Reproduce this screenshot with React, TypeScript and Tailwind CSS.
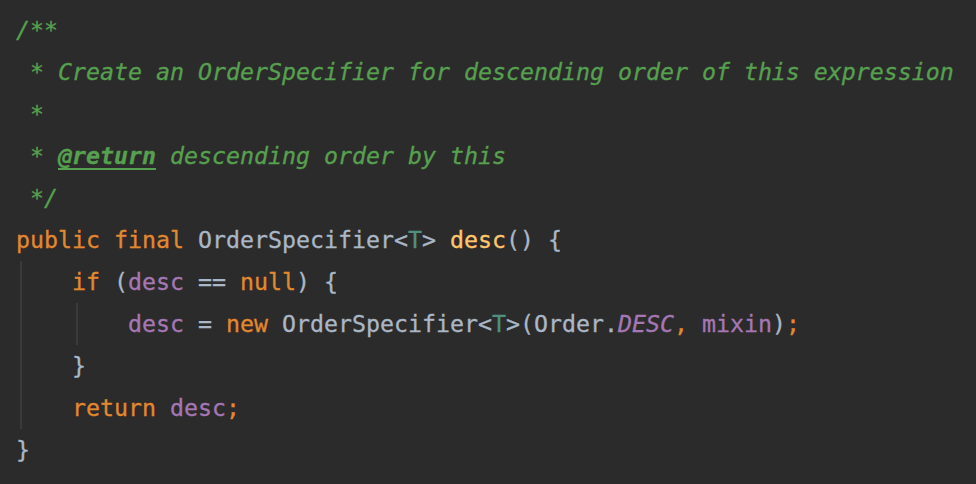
const C = {
  comment: 'text-[#56a04f] italic',
  kw: 'text-[#e2882f]',
  text: 'text-[#a9b7c6]',
  field: 'text-[#a577b4]',
  method: 'text-[#ffc66d]',
  tparam: 'text-[#4f8f7f]',
};

function Guide({ left }: { left: string }) {
  return <span className={`absolute top-0 h-full w-[2px] bg-[#3a3a3a] ${left}`} />;
}

function Line({ children, guides }: { children?: React.ReactNode; guides?: React.ReactNode }) {
  return (
    <div className="relative h-[42px] leading-[42px] whitespace-pre">
      {guides}
      <span className="relative">{children}</span>
    </div>
  );
}

export default function App() {
  const g1 = <Guide left="left-[4px]" />;
  const g2 = <Guide left="left-[60px]" />;
  return (
    <div
      className="w-[976px] h-[484px] bg-[#2b2b2b] pl-4 pt-[9px] overflow-hidden text-[23.25px] [-webkit-text-stroke:0.3px_currentColor]"
      style={{ fontFamily: '"DejaVu Sans Mono", monospace' }}
    >
      <Line><span className={C.comment}>/**</span></Line>
      <Line><span className={C.comment}> * Create an OrderSpecifier for descending order of this expression</span></Line>
      <Line><span className={C.comment}> *</span></Line>
      <Line>
        <span className={C.comment}> * </span>
        <span className={`${C.comment} font-bold underline underline-offset-[4px] decoration-2`}>@return</span>
        <span className={C.comment}> descending order by this</span>
      </Line>
      <Line><span className={C.comment}> */</span></Line>
      <Line>
        <span className={C.kw}>public final </span>
        <span className={C.text}>OrderSpecifier&lt;</span>
        <span className={C.tparam}>T</span>
        <span className={C.text}>&gt; </span>
        <span className={C.method}>desc</span>
        <span className={C.text}>() {'{'}</span>
      </Line>
      <Line guides={g1}>
        <span className={C.text}>    </span>
        <span className={C.kw}>if </span>
        <span className={C.text}>(</span>
        <span className={C.field}>desc</span>
        <span className={C.text}> == </span>
        <span className={C.kw}>null</span>
        <span className={C.text}>) {'{'}</span>
      </Line>
      <Line guides={<>{g1}{g2}</>}>
        <span className={C.text}>        </span>
        <span className={C.field}>desc</span>
        <span className={C.text}> = </span>
        <span className={C.kw}>new </span>
        <span className={C.text}>OrderSpecifier&lt;</span>
        <span className={C.tparam}>T</span>
        <span className={C.text}>&gt;(Order.</span>
        <span className={`${C.field} italic`}>DESC</span>
        <span className={C.kw}>, </span>
        <span className={C.field}>mixin</span>
        <span className={C.text}>)</span>
        <span className={C.kw}>;</span>
      </Line>
      <Line guides={g1}>
        <span className={C.text}>    {'}'}</span>
      </Line>
      <Line guides={g1}>
        <span className={C.text}>    </span>
        <span className={C.kw}>return </span>
        <span className={C.field}>desc</span>
        <span className={C.kw}>;</span>
      </Line>
      <Line>
        <span className={C.text}>{'}'}</span>
      </Line>
    </div>
  );
}
